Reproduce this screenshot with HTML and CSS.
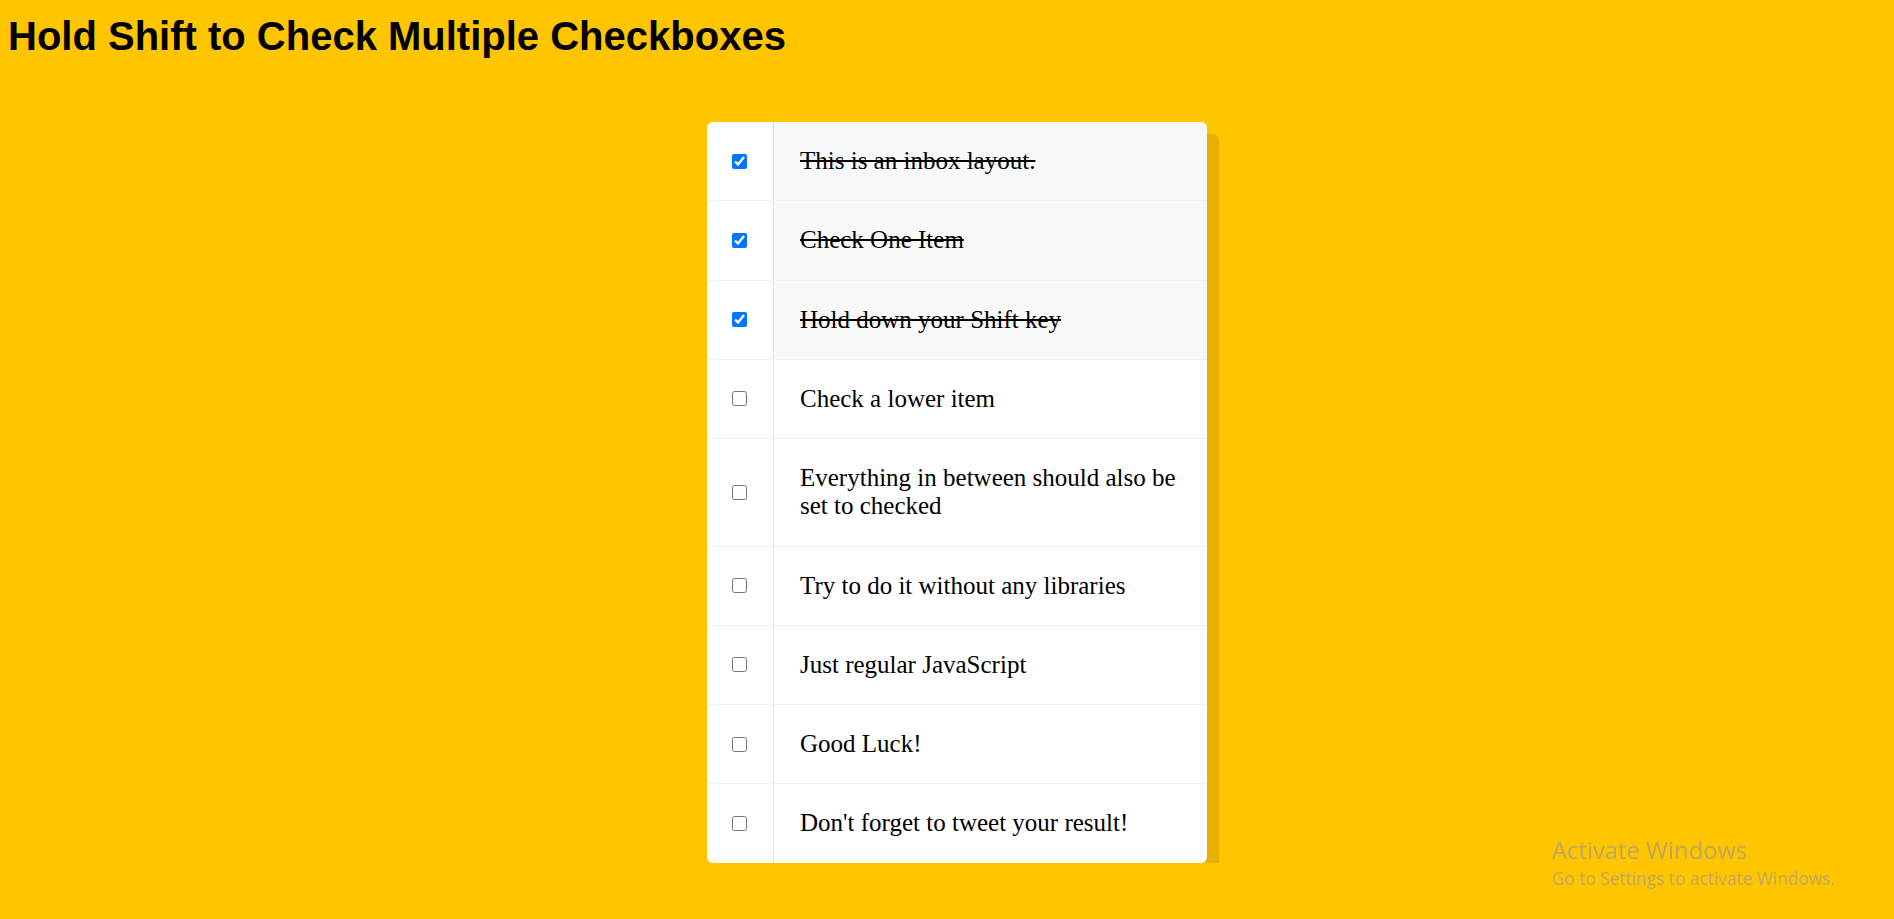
FILE: index.html
```html
<!DOCTYPE html>
<html lang="en">
<head>
<meta charset="UTF-8">
<title>Hold Shift to Check Multiple Checkboxes</title>
<link rel="stylesheet" href="styles.css">
</head>
<body>
  <h1 class="title">Hold Shift to Check Multiple Checkboxes</h1>
  <div class="stage">
    <div class="inbox">
      <div class="item">
        <input type="checkbox" checked>
        <p>This is an inbox layout.</p>
      </div>
      <div class="item">
        <input type="checkbox" checked>
        <p>Check One Item</p>
      </div>
      <div class="item">
        <input type="checkbox" checked>
        <p>Hold down your Shift key</p>
      </div>
      <div class="item">
        <input type="checkbox">
        <p>Check a lower item</p>
      </div>
      <div class="item">
        <input type="checkbox">
        <p>Everything in between should also be set to checked</p>
      </div>
      <div class="item">
        <input type="checkbox">
        <p>Try to do it without any libraries</p>
      </div>
      <div class="item">
        <input type="checkbox">
        <p>Just regular JavaScript</p>
      </div>
      <div class="item">
        <input type="checkbox">
        <p>Good Luck!</p>
      </div>
      <div class="item">
        <input type="checkbox">
        <p>Don't forget to tweet your result!</p>
      </div>
    </div>
  </div>
  <div class="watermark">
    <div class="wm-title">Activate Windows</div>
    <div class="wm-sub">Go to Settings to activate Windows.</div>
  </div>
</body>
</html>
```

FILE: styles.css
```css
html {
  background: #ffc600;
  font-family: "Liberation Sans", Arial, sans-serif;
}

body {
  margin: 0;
  padding: 13px 8px 0;
}

.title {
  margin: 0;
  font-family: "Liberation Sans", Arial, sans-serif;
  font-size: 40px;
  line-height: 46px;
  font-weight: bold;
  color: #000;
}

.stage {
  padding-left: 20px;
}

.inbox {
  max-width: 500px;
  margin: 63px auto 0;
  background: #fff;
  border-radius: 6px;
  box-shadow: 12px 12px 0 rgba(0, 0, 0, 0.1);
  overflow: hidden;
}

.item {
  display: flex;
  align-items: center;
  border-bottom: 1px solid #f1f1f1;
}

.item:last-child {
  border-bottom: 0;
}

.item input[type="checkbox"] {
  width: 15px;
  height: 15px;
  margin: 0 26px 0 25px;
  flex: none;
}

.item p {
  margin: 0;
  padding: 25px 25px 25px 26px;
  flex: 1;
  font-family: "Liberation Serif", "Times New Roman", serif;
  font-size: 25px;
  line-height: 28.25px;
  font-weight: normal;
  color: #000;
  border-left: 1px solid #d1e2ff;
}

.item input:checked + p {
  background: #f9f9f9;
  text-decoration: line-through;
}

.watermark {
  position: fixed;
  left: 1552px;
  top: 835px;
  font-family: "Open Sans", "Noto Sans", sans-serif;
  color: #bfa65e;
}

.wm-title {
  font-size: 23.8px;
  line-height: 30px;
}

.wm-sub {
  margin-top: 2px;
  font-size: 17.3px;
  line-height: 24px;
}
```
